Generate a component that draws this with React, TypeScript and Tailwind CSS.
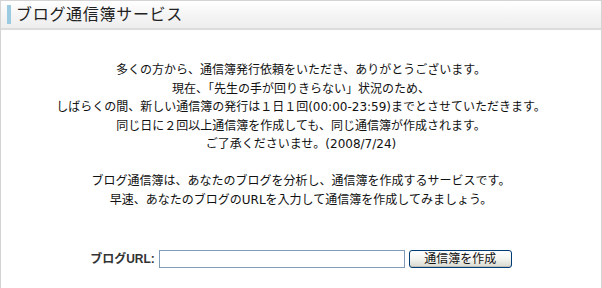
const lines = [
  "多くの方から、通信簿発行依頼をいただき、ありがとうございます。",
  "現在、「先生の手が回りきらない」状況のため、",
  "しばらくの間、新しい通信簿の発行は１日１回(00:00-23:59)までとさせていただきます。",
  "同じ日に２回以上通信簿を作成しても、同じ通信簿が作成されます。",
  "ご了承くださいませ。(2008/7/24)",
];

const intro = [
  "ブログ通信簿は、あなたのブログを分析し、通信簿を作成するサービスです。",
  "早速、あなたのブログのURLを入力して通信簿を作成してみましょう。",
];

export default function App() {
  return (
    <div
      className="h-[288px] w-[602px] overflow-hidden bg-white text-[#222]"
      style={{ fontFamily: '"Liberation Sans", "Noto Sans CJK JP", sans-serif' }}
    >
      <div className="flex h-[320px] flex-col border-x border-t border-[#d4d4d4]">
        <div className="flex h-[29px] items-center border-b-2 border-[#dcdcdc] bg-gradient-to-b from-[#ffffff] via-[#f5f5f5] to-[#eeeeee] pl-[6px]">
          <span className="mr-[5px] h-[19px] w-[4px] bg-[#9ccae0]" />
          <h1 className="text-[16px] leading-none tracking-[0.7px] text-[#222]">ブログ通信簿サービス</h1>
        </div>

        <div
          className="flex flex-col items-center pt-[31px] text-[12px] leading-[18.5px] text-[#111]"
          style={{ fontFamily: '"DejaVu Sans", "Noto Sans CJK JP", sans-serif' }}
        >
          {lines.map((l) => (
            <p key={l}>{l}</p>
          ))}
          <p className="h-[18.5px]" />
          {intro.map((l) => (
            <p key={l}>{l}</p>
          ))}
        </div>

        <form className="mt-[41px] flex items-center justify-center" onSubmit={(e) => e.preventDefault()}>
          <label className="mr-[4px] text-[12px] font-bold text-[#333]">ブログURL:</label>
          <input
            type="text"
            className="h-[18px] w-[246px] border border-[#7f9db9] bg-white px-1 text-[12px] outline-none"
          />
          <button
            type="submit"
            className="ml-[4px] h-[18px] w-[103px] rounded-[3px] border border-[#003c74] bg-gradient-to-b from-[#ffffff] via-[#f4f4f0] to-[#d8d8d0] text-[12px] leading-none text-[#111] shadow-[inset_0_-1px_0_#c0c0b8]"
          >
            通信簿を作成
          </button>
        </form>
      </div>
    </div>
  );
}
